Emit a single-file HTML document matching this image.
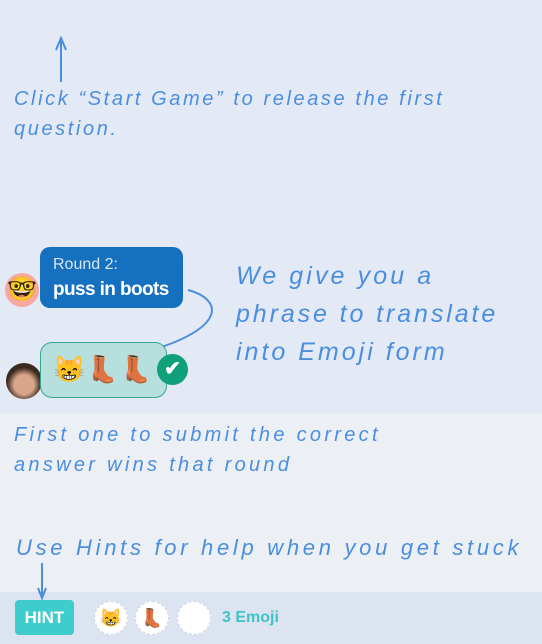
<!DOCTYPE html>
<html><head><meta charset="utf-8"><style>
body{margin:0;width:542px;height:644px;position:relative;overflow:hidden;font-family:"Liberation Sans",sans-serif;background:#e4eaf5}
.h{position:absolute;color:#4a8ee0;font-style:italic;white-space:nowrap}
.mid{position:absolute;left:0;top:413px;width:542px;height:179px;background:#eceff4}
.bar{position:absolute;left:0;top:592px;width:542px;height:52px;background:#dce3f1}
.bubble{position:absolute;left:40px;top:247px;width:143px;height:61px;background:#1570bf;border-radius:10px;color:#fff}
.ans{position:absolute;left:40px;top:342px;width:127px;height:56px;background:#b6dfdd;border:1.5px solid #35a98e;border-radius:12px;box-sizing:border-box;font-size:26px;line-height:52px;padding-left:12px;letter-spacing:1px}
.chk{position:absolute;left:157px;top:354px;width:31px;height:31px;border-radius:50%;background:#10a07a;color:#fff;text-align:center;line-height:31px;font-size:20px;font-weight:bold}
.hint{position:absolute;left:15px;top:600px;width:59px;height:35px;background:#3ecccc;border-radius:4px;color:#fff;font-weight:bold;font-size:17px;text-align:center;line-height:35px}
.c{position:absolute;top:601px;width:34px;height:34px;border-radius:50%;background:#fff;border:1.5px dashed #cbd3e4;box-sizing:border-box;text-align:center;line-height:32px;font-size:18px}
</style></head><body>
<div class="mid"></div><div class="bar"></div>
<svg style="position:absolute;left:0;top:0" width="542" height="644">
<line x1="61" y1="40" x2="61" y2="82" stroke="#4a8ee0" stroke-width="2"/>
<path d="M56 50 L61 38 L66 50" fill="none" stroke="#4a8ee0" stroke-width="2"/>
<path d="M188 290 C225 300 225 330 145 352" fill="none" stroke="#4a8ee0" stroke-width="2"/>
<path d="M152 343 L144 352 L156 356" fill="none" stroke="#4a8ee0" stroke-width="2"/>
<line x1="42" y1="563" x2="42" y2="597" stroke="#4a8ee0" stroke-width="2"/>
<path d="M38 588 L42 598 L46 588" fill="none" stroke="#4a8ee0" stroke-width="2"/>
</svg>
<div class="h" style="left:14px;top:88px;font-size:20px;letter-spacing:2.6px">Click “Start Game” to release the first</div>
<div class="h" style="left:14px;top:118px;font-size:20px;letter-spacing:2.6px">question.</div>
<div class="h" style="left:236px;top:262px;font-size:25px;letter-spacing:3.1px">We give you a</div>
<div class="h" style="left:236px;top:300px;font-size:25px;letter-spacing:2.9px">phrase to translate</div>
<div class="h" style="left:236px;top:338px;font-size:25px;letter-spacing:3px">into Emoji form</div>
<div class="h" style="left:14px;top:424px;font-size:20px;letter-spacing:3.3px">First one to submit the correct</div>
<div class="h" style="left:14px;top:454px;font-size:20px;letter-spacing:3.3px">answer wins that round</div>
<div class="h" style="left:16px;top:535px;font-size:22px;letter-spacing:3.7px">Use Hints for help when you get stuck</div>
<div style="position:absolute;left:5px;top:273px;width:34px;height:34px;border-radius:50%;background:#f7a8a0;text-align:center;line-height:34px;font-size:24px">🤓</div>
<div class="bubble"><div style="position:absolute;left:13px;top:9px;font-size:16px;color:#d8e6f5">Round 2:</div><div style="position:absolute;left:13px;top:32px;font-size:19px;font-weight:bold;letter-spacing:-0.6px">puss in boots</div></div>
<div style="position:absolute;left:6px;top:363px;width:36px;height:36px;border-radius:50%;background:radial-gradient(circle at 50% 60%,#d9a58a 0 35%,#3a2a20 60%)"></div>
<div class="ans">😸👢👢</div>
<div class="chk">✔</div>
<div class="hint">HINT</div>
<div class="c" style="left:94px">😸</div>
<div class="c" style="left:135px">👢</div>
<div class="c" style="left:177px"></div>
<div style="position:absolute;left:222px;top:609px;font-size:16px;font-weight:bold;color:#3ec3c7">3 Emoji</div>
</body></html>
